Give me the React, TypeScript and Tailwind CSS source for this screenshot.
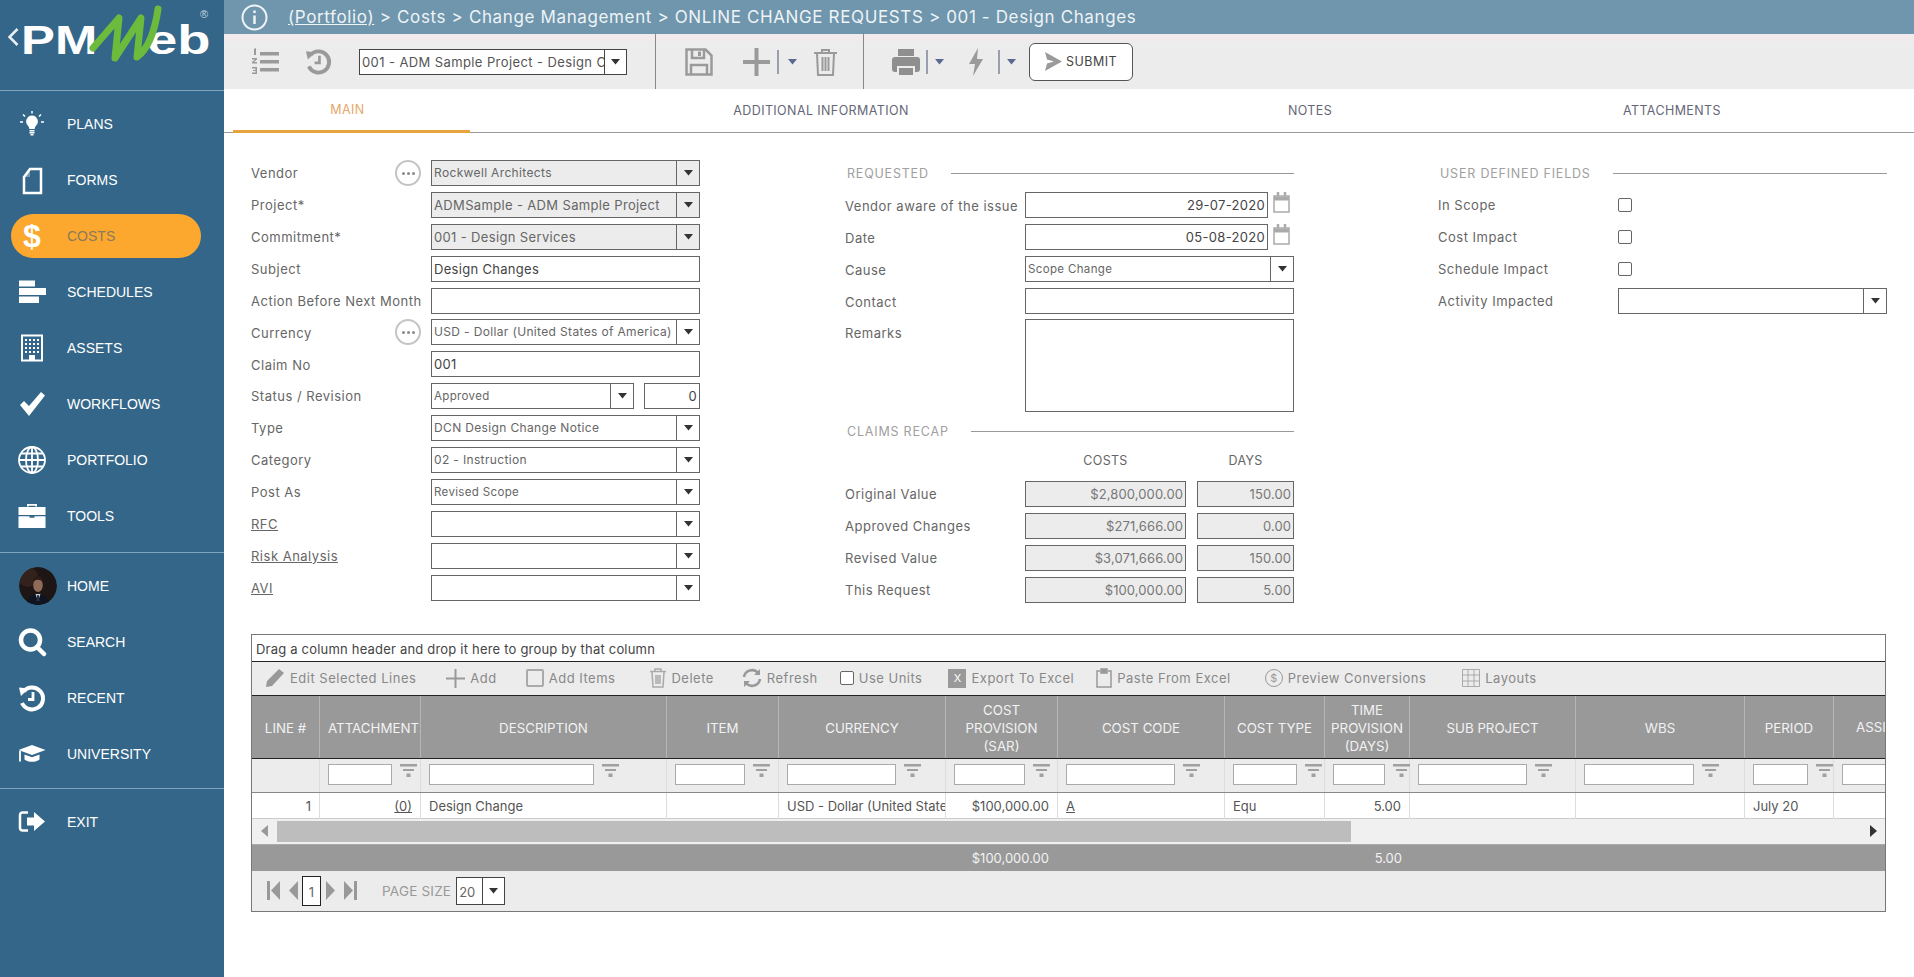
import React from 'react';

const LABEL = 'text-[13px] text-[#666] tracking-[0.5px] whitespace-nowrap';

const Caret = ({ color = '#333' }: { color?: string }) => (
  <svg width="9" height="6" viewBox="0 0 9 6"><path d="M0 0h9L4.500 5.500z" fill={color} /></svg>
);

// sidebar icons, all 30x30 and white
const Ico = ({ children }: { children: React.ReactNode }) => (
  <svg width="30" height="30" viewBox="0 0 30 30" fill="#fff">{children}</svg>
);

const PlansIcon = () => (
  <Ico>
    <path d="M15 6.500a6 6 0 0 1 4 10.300c-.9 1-1.200 2-1.300 3.200h-5.400c-.1-1.200-.4-2.200-1.300-3.200A6 6 0 0 1 15 6.500z" />
    <path d="M12.500 21h5v1.500h-5zM12.500 23h5v1.500h-5zM13.500 25h3v1.500h-3z" />
    <path d="M15 2v2.500M6 5.500l2 2M24 5.500l-2 2M3 13h3M24 13h3" stroke="#fff" strokeWidth="1.500" />
  </Ico>
);
const FormsIcon = () => (
  <Ico>
    <path d="M7 12l6-8h11v24H7z" fill="none" stroke="#fff" strokeWidth="2.500" />
    <path d="M13 4v8H7z" fill="#fff" opacity="0.35" />
  </Ico>
);
const SchedulesIcon = () => (
  <Ico>
    <path d="M2 3.500h16v6H2zM2 11h27v7H2zM2 19.500h20v6.500H2z" />
  </Ico>
);
const AssetsIcon = () => (
  <Ico>
    <path fillRule="evenodd" d="M4 1.500h22v27H4zM6 3.500v23h6V22h6v4.500h6v-23z" />
    <path d="M8 6h2v2H8zM12 6h2v2h-2zM16 6h2v2h-2zM20 6h2v2h-2zM8 10h2v2H8zM12 10h2v2h-2zM16 10h2v2h-2zM20 10h2v2h-2zM8 14h2v2H8zM12 14h2v2h-2zM16 14h2v2h-2zM20 14h2v2h-2zM8 18h2v2H8zM12 18h2v2h-2zM16 18h2v2h-2zM20 18h2v2h-2z" />
  </Ico>
);
const CheckIcon = () => (
  <Ico>
    <path d="M3 16l4-4 5 5L24 3l4 3.500L12 27z" />
  </Ico>
);
const GlobeIcon = () => (
  <svg width="30" height="30" viewBox="0 0 30 30" fill="none" stroke="#fff" strokeWidth="1.800">
    <circle cx="15" cy="15" r="13" />
    <ellipse cx="15" cy="15" rx="6" ry="13" />
    <path d="M15 2v26M2 15h26M4 8.500h22M4 21.500h22" />
  </svg>
);
const ToolsIcon = () => (
  <Ico>
    <path d="M10 5.500V3h10v2.500h-1.800V4.800h-6.400v.7z" />
    <path d="M1.500 6h27v8h-27zM1.500 15.200h11v1.500h5v-1.500h11V27h-27z" />
  </Ico>
);
const SearchIcon = () => (
  <svg width="30" height="30" viewBox="0 0 30 30" fill="none" stroke="#fff">
    <circle cx="13.500" cy="13" r="9.500" strokeWidth="4.500" />
    <path d="M20 20l7 7" strokeWidth="4.500" strokeLinecap="round" />
  </svg>
);
const RecentIcon = ({ color = '#fff' }: { color?: string }) => (
  <svg width="100%" height="100%" viewBox="0 0 30 30" fill="none" stroke={color}>
    <path d="M6.500 8.500A11 11 0 1 1 5 20" strokeWidth="4" />
    <path d="M2 4.500l9.500 1-7.500 7.500z" fill={color} stroke="none" />
    <path d="M16 9v7.500h-5" strokeWidth="2.800" />
  </svg>
);
const UniversityIcon = () => (
  <Ico>
    <path d="M1.500 11L15 6l13.500 5L15 16z" />
    <path d="M7.500 15.500L15 18.200l7.500-2.700v5c-2 1.500-4.500 2.300-7.500 2.300s-5.500-.8-7.500-2.300z" />
    <path d="M3 12v10.500" stroke="#fff" strokeWidth="1.800" />
  </Ico>
);
const ExitIcon = () => (
  <Ico>
    <path d="M11 5.500H5.500A2.500 2.500 0 0 0 3 8v13a2.500 2.500 0 0 0 2.500 2.500H11" fill="none" stroke="#fff" strokeWidth="2.500" />
    <path d="M10 10.500h7V5l11 9.500L17 24v-5.500h-7z" />
  </Ico>
);
const Avatar = () => (
  <svg width="38" height="38" viewBox="0 0 38 38" className="ml-[2px] rounded-full">
    <circle cx="19" cy="19" r="19" fill="#1e1614" />
    <circle cx="9" cy="10" r="10" fill="#33221c" />
    <path d="M7 38c1-8 5-10 12-11 7 1 11 3 12 11z" fill="#10141e" />
    <path d="M16.500 27l2.500 7 2.500-7z" fill="#c9ced6" />
    <path d="M18.200 28h1.600l.8 6h-3.200z" fill="#27304a" />
    <ellipse cx="19" cy="18" rx="4.800" ry="7" fill="#8f6a58" />
    <path d="M14 16c-.8-5 2.500-6.500 5-6.500s5.800 1.500 5 6.500c-1-2.500-2.500-3.300-5-3.300s-4 .8-5 3.300z" fill="#2a1c16" />
  </svg>
);

const NavItem = ({ icon, label, active }: { icon: React.ReactNode; label: string; active?: boolean }) => (
  <div className="h-[56px] px-[11px] flex items-center">
    <div className={`flex items-center w-[190px] h-[44px] pl-[6px] rounded-full ${active ? 'bg-[#fca82e]' : ''}`}>
      <div className="w-[50px] flex items-center shrink-0">{icon}</div>
      <span className={`font-['Liberation_Sans',sans-serif] text-[14px] ${active ? 'text-[#8b7a5c]' : 'text-white'}`}>{label}</span>
    </div>
  </div>
);

const Sidebar = () => (
  <aside className="w-[224px] shrink-0 bg-[#336688] min-h-[977px] flex flex-col">
    {/* logo */}
    <div className="relative h-[91px] border-b border-[#7fa3bb] shrink-0">
      <svg className="absolute left-[7px] top-[27px]" width="12" height="20" viewBox="0 0 12 20" fill="none" stroke="#e8eef2" strokeWidth="2.500">
        <path d="M10.500 2L2.500 10l8 8" />
      </svg>
      <span className="absolute left-[21px] top-[18px] origin-left scale-x-[1.27] font-['Liberation_Sans',sans-serif] font-bold text-[40px] leading-[44px] text-white">PM</span>
      <span className="absolute left-[147px] top-[18px] origin-left scale-x-[1.36] font-['Liberation_Sans',sans-serif] font-bold text-[40px] leading-[44px] text-white">eb</span>
      <svg className="absolute left-[88px] top-[5px]" width="76" height="60" viewBox="0 0 76 60" fill="none" stroke="#6cbb3c" strokeLinejoin="round" strokeLinecap="round">
        <path d="M5 43L31 13 27 53 53 13 49 52C60 44 67 25 70 4" strokeWidth="7" />
      </svg>
      <span className="absolute left-[200px] top-[6px] font-['Liberation_Sans',sans-serif] text-[11px] text-[#c5d6e0]">®</span>
    </div>
    <div className="pt-[5px] pb-[8px] border-b border-[#7fa3bb]">
      <NavItem icon={<PlansIcon />} label="PLANS" />
      <NavItem icon={<FormsIcon />} label="FORMS" />
      <NavItem icon={<span className="block w-[30px] text-center font-['Liberation_Sans',sans-serif] font-bold text-[32px] leading-[36px] text-white">$</span>} label="COSTS" active />
      <NavItem icon={<SchedulesIcon />} label="SCHEDULES" />
      <NavItem icon={<AssetsIcon />} label="ASSETS" />
      <NavItem icon={<CheckIcon />} label="WORKFLOWS" />
      <NavItem icon={<GlobeIcon />} label="PORTFOLIO" />
      <NavItem icon={<ToolsIcon />} label="TOOLS" />
    </div>
    <div className="pt-[5px] pb-[6px] border-b border-[#7fa3bb]">
      <NavItem icon={<Avatar />} label="HOME" />
      <NavItem icon={<SearchIcon />} label="SEARCH" />
      <NavItem icon={<div className="w-[30px] h-[30px]"><RecentIcon /></div>} label="RECENT" />
      <NavItem icon={<UniversityIcon />} label="UNIVERSITY" />
    </div>
    <div className="pt-[5px]">
      <NavItem icon={<ExitIcon />} label="EXIT" />
    </div>
  </aside>
);

const Toolbar = () => (
  <div className="h-[55px] flex items-center bg-[linear-gradient(#f1ebee_7px,#ececec_7px)]">
    <svg className="ml-[27px]" width="28" height="27" viewBox="0 0 28 27" fill="#9a9a9a">
      <path d="M9 4h19v3.500H9zM9 12h19v3.500H9zM9 20h19v3.500H9z" />
      <path d="M3 1l2-1v7H3zM1 10h5v1.500l-3 2.500h3v1.500H1v-1.500l3-2.500H1zM1 19h5v7H1v-1.500h3.500v-1.500H2v-1h2.500v-1.500H1z" />
    </svg>
    <div className="ml-[25px] w-[29px] h-[29px]"><RecentIcon color="#9a9a9a" /></div>
    <div className="ml-[26px] w-[268px] h-[26px] flex border border-[#444] bg-white">
      <span className="flex-1 overflow-hidden whitespace-nowrap pl-[2px] text-[13px] leading-[24px] tracking-[0.4px] text-[#555]">001 - ADM Sample Project - Design Changes</span>
      <span className="w-[22px] shrink-0 border-l border-[#444] flex items-center justify-center"><Caret /></span>
    </div>
    <div className="ml-[28px] w-px self-stretch bg-[#888]" />
    <svg className="ml-[29px]" width="28" height="28" viewBox="0 0 28 28" fill="none" stroke="#9a9a9a" strokeWidth="2.500">
      <path d="M1.500 1.500h19l6 6v19h-25z" />
      <path d="M7 2v8h12V2M6 26v-9h16v9" />
      <path d="M13 3.500h3v4.500h-3z" fill="#9a9a9a" stroke="none" />
    </svg>
    <svg className="ml-[30px]" width="27" height="28" viewBox="0 0 27 28" fill="#9a9a9a"><path d="M11.500 0h4v12H27v4H15.500v12h-4V16H0v-4h11.500z" /></svg>
    <div className="ml-[7px] w-[2px] h-[24px] bg-[#9a9fb0]" />
    <div className="ml-[9px]"><Caret color="#5a6a90" /></div>
    <svg className="ml-[16px]" width="25" height="28" viewBox="0 0 25 28" fill="none" stroke="#9a9a9a" strokeWidth="2">
      <path d="M1 5h23M9 5V2h7v3M4 5l1 22h15l1-22" />
      <path d="M9.500 9v14M12.500 9v14M15.500 9v14" />
    </svg>
    <div className="ml-[25px] w-px self-stretch bg-[#888]" />
    <svg className="ml-[28px]" width="28" height="26" viewBox="0 0 28 26" fill="#8f8f8f">
      <path d="M6 0h16v7H6z" />
      <path fillRule="evenodd" d="M3 8h22a3 3 0 0 1 3 3v9a3 3 0 0 1-3 3h-2v-6H5v6H3a3 3 0 0 1-3-3v-9a3 3 0 0 1 3-3z" />
      <path d="M7 19h14v7H7z" />
    </svg>
    <div className="ml-[6px] w-[2px] h-[24px] bg-[#9a9fb0]" />
    <div className="ml-[7px]"><Caret color="#5a6a90" /></div>
    <svg className="ml-[24px]" width="16" height="28" viewBox="0 0 16 28" fill="#9a9a9a"><path d="M10 0L1 16h6L5 28l10-17H9z" /></svg>
    <div className="ml-[14px] w-[2px] h-[24px] bg-[#9a9fb0]" />
    <div className="ml-[7px]"><Caret color="#5a6a90" /></div>
    <div className="ml-[13px] w-[104px] h-[38px] flex items-center justify-center gap-[4px] rounded-[6px] border border-[#555] bg-white">
      <svg width="17" height="19" viewBox="0 0 17 19" fill="#9a9a9a"><path d="M0 0l17 9.500L0 19l2-7.500 7-2-7-2z" /></svg>
      <span className="pt-[2px] text-[12.500px] tracking-[0.5px] text-[#444]">SUBMIT</span>
    </div>
  </div>
);

const Tabs = () => (
  <div className="h-[44px] pl-[9px] flex border-b border-[#999] text-[12.500px] tracking-[0.4px] text-[#667]">
    <div className="w-[237px] h-[44px] pr-[8px] pt-[1px] flex items-center justify-center border-b-[3px] border-[#e8a33d] text-[#e6a868]">MAIN</div>
    <div className="w-[702px] pt-[1px] flex items-center justify-center">ADDITIONAL INFORMATION</div>
    <div className="w-[276px] pt-[1px] flex items-center justify-center">NOTES</div>
    <div className="w-[448px] pt-[1px] flex items-center justify-center">ATTACHMENTS</div>
  </div>
);

const Select = ({ value = '', size = 'text-[12px]', gray, caretW = 'w-[23px]' }: { value?: string; size?: string; gray?: boolean; caretW?: string }) => (
  <div className={`flex-1 min-w-0 h-[26px] flex border border-[#666] ${gray ? 'bg-[#ececec]' : 'bg-white'}`}>
    <span className={`flex-1 min-w-0 overflow-hidden whitespace-nowrap pl-[2px] leading-[24px] tracking-[0.35px] text-[#666] ${size}`}>{value}</span>
    <span className={`${caretW} shrink-0 border-l border-[#666] flex items-center justify-center`}><Caret /></span>
  </div>
);

const Input = ({ value = '', right, color = 'text-[#444]' }: { value?: string; right?: boolean; color?: string }) => (
  <div className={`flex-1 min-w-0 h-[26px] border border-[#666] bg-white px-[2px] text-[13px] leading-[24px] tracking-[0.3px] whitespace-nowrap ${right ? 'text-right' : ''} ${color}`}>{value}</div>
);

const Dots = () => (
  <span className="w-[26px] h-[26px] mr-[10px] rounded-full border-2 border-[#c4c4c4] flex items-center justify-center gap-[2px]">
    <i className="w-[3px] h-[3px] rounded-full bg-[#8a8a8a]" />
    <i className="w-[3px] h-[3px] rounded-full bg-[#8a8a8a]" />
    <i className="w-[3px] h-[3px] rounded-full bg-[#8a8a8a]" />
  </span>
);

const Row = ({ label, dots, link, children }: { label: string; dots?: boolean; link?: boolean; children: React.ReactNode }) => (
  <div className="h-[26px] flex items-center">
    <span className={`w-[144px] shrink-0 pt-[2px] ${LABEL} ${link ? 'underline' : ''}`}>{label}</span>
    {dots ? <Dots /> : <span className="w-[36px] shrink-0" />}
    {children}
  </div>
);

const SectionTitle = ({ text, className = '' }: { text: string; className?: string }) => (
  <div className={`h-[26px] flex items-center gap-[22px] pl-[2px] ${className}`}>
    <span className="pt-[2px] text-[12.500px] tracking-[0.8px] text-[#a0a0a0] whitespace-nowrap">{text}</span>
    <div className="flex-1 h-px bg-[#999]" />
  </div>
);

const Calendar = () => (
  <svg className="ml-[5px] mr-[4px] shrink-0" width="17" height="21" viewBox="0 0 17 21" fill="none" stroke="#aaa" strokeWidth="1.500">
    <path d="M1 4h15v16H1z" />
    <path d="M1 6.500h15" strokeWidth="4" />
    <path d="M5 0v4M12 0v4" strokeWidth="2.500" />
  </svg>
);

const Row2 = ({ label, children }: { label: string; children: React.ReactNode }) => (
  <div className="flex items-start min-h-[26px]">
    <span className={`w-[180px] h-[26px] shrink-0 leading-[28px] ${LABEL}`}>{label}</span>
    {children}
  </div>
);

const Recap = ({ label, cost, days }: { label: string; cost: string; days: string }) => (
  <div className="h-[26px] flex items-center">
    <span className={`w-[180px] shrink-0 pt-[2px] ${LABEL}`}>{label}</span>
    <div className="w-[161px] h-[26px] border border-[#666] bg-[#ececec] px-[2px] text-right text-[13px] leading-[24px] tracking-[0.1px] text-[#777]">{cost}</div>
    <div className="ml-[11px] w-[97px] h-[26px] border border-[#666] bg-[#ececec] px-[2px] text-right text-[13px] leading-[24px] tracking-[0.1px] text-[#777]">{days}</div>
  </div>
);

const Form = () => (
  <div className="flex pl-[27px] pt-[27px]">
    <div className="w-[449px] shrink-0 flex flex-col gap-[5.900px]">
      <Row label="Vendor" dots><Select value="Rockwell Architects" size="text-[12px]" gray /></Row>
      <Row label="Project*"><Select value="ADMSample - ADM Sample Project" size="text-[13px]" gray /></Row>
      <Row label="Commitment*"><Select value="001 - Design Services" size="text-[13px]" gray /></Row>
      <Row label="Subject"><Input value="Design Changes" /></Row>
      <Row label="Action Before Next Month"><Input /></Row>
      <Row label="Currency" dots><Select value="USD - Dollar (United States of America)" size="text-[12px]" /></Row>
      <Row label="Claim No"><Input value="001" /></Row>
      <Row label="Status / Revision">
        <Select value="Approved" size="text-[11.500px]" />
        <div className="w-[56px] ml-[10px] shrink-0 flex"><Input value="0" right /></div>
      </Row>
      <Row label="Type"><Select value="DCN Design Change Notice" size="text-[12px]" /></Row>
      <Row label="Category"><Select value="02 - Instruction" size="text-[12px]" /></Row>
      <Row label="Post As"><Select value="Revised Scope" size="text-[11.500px]" /></Row>
      <Row label="RFC" link><Select /></Row>
      <Row label="Risk Analysis" link><Select /></Row>
      <Row label="AVI" link><Select /></Row>
    </div>

    <div className="w-[449px] ml-[145px] shrink-0 flex flex-col gap-[5.900px]">
      <SectionTitle text="REQUESTED" />
      <Row2 label="Vendor aware of the issue"><Input value="29-07-2020" right /><Calendar /></Row2>
      <Row2 label="Date"><Input value="05-08-2020" right /><Calendar /></Row2>
      <Row2 label="Cause"><Select value="Scope Change" size="text-[11.500px]" /></Row2>
      <Row2 label="Contact"><Input /></Row2>
      <Row2 label="Remarks"><div className="flex-1 h-[93px] border border-[#666] bg-white" /></Row2>
      <SectionTitle text="CLAIMS RECAP" />
      <div className="h-[20px] mt-[1px] mb-[4px] flex items-center text-[12.500px] tracking-[0.3px] text-[#666]">
        <span className="w-[180px]" />
        <span className="w-[161px] text-center">COSTS</span>
        <span className="ml-[11px] w-[97px] text-center">DAYS</span>
      </div>
      <Recap label="Original Value" cost="$2,800,000.00" days="150.00" />
      <Recap label="Approved Changes" cost="$271,666.00" days="0.00" />
      <Recap label="Revised Value" cost="$3,071,666.00" days="150.00" />
      <Recap label="This Request" cost="$100,000.00" days="5.00" />
    </div>

    <div className="w-[449px] ml-[144px] shrink-0 flex flex-col gap-[5.900px]">
      <SectionTitle text="USER DEFINED FIELDS" />
      {['In Scope', 'Cost Impact', 'Schedule Impact'].map((l) => (
        <div key={l} className="h-[26px] flex items-center">
          <span className={`w-[180px] shrink-0 pt-[2px] ${LABEL}`}>{l}</span>
          <span className="w-[14px] h-[14px] rounded-[2px] border border-[#666] bg-white" />
        </div>
      ))}
      <div className="h-[26px] flex items-center">
        <span className={`w-[180px] shrink-0 pt-[2px] ${LABEL}`}>Activity Impacted</span>
        <Select />
      </div>
    </div>
  </div>
);

const Funnel = () => (
  <svg className="shrink-0" width="17" height="13" viewBox="0 0 17 13" fill="#a0a0a0"><path d="M0 0h17v2.500H0zM3 5h11v2H3zM6.500 9.500h4V13h-4z" /></svg>
);

const COLS = 'grid grid-cols-[68px_101px_246px_112px_167px_112px_167px_100px_85px_166px_169px_89px_60px]';

const headers = ['LINE #', 'ATTACHMENTS', 'DESCRIPTION', 'ITEM', 'CURRENCY', 'COST PROVISION (SAR)', 'COST CODE', 'COST TYPE', 'TIME PROVISION (DAYS)', 'SUB PROJECT', 'WBS', 'PERIOD'];

const filters: (string | null)[] = [null, 'w-[64px]', 'w-[165px]', 'w-[70px]', 'w-[109px]', 'w-[71px]', 'w-[109px]', 'w-[64px]', 'w-[52px]', 'w-[109px]', 'w-[110px]', 'w-[55px]', 'w-[50px]'];

const Tool = ({ icon, label, className = '' }: { icon: React.ReactNode; label: string; className?: string }) => (
  <div className={`flex items-center gap-[5px] ${className}`}>
    {icon}
    <span className="text-[13px] tracking-[0.5px] text-[#888] whitespace-nowrap">{label}</span>
  </div>
);

const Cell = ({ children, className = '' }: { children?: React.ReactNode; className?: string }) => (
  <div className={`h-[26px] border-r border-[#ddd] px-[8px] overflow-hidden whitespace-nowrap text-[13px] leading-[26px] text-[#555] ${className}`}>{children}</div>
);

const GridTable = () => (
  <div className="mt-[31px] ml-[27px] w-[1635px] border border-[#777] bg-white overflow-hidden">
    <div className="h-[27px] px-[4px] pt-[1px] text-[13px] leading-[26px] tracking-[0.2px] text-[#444] border-b border-[#222]">Drag a column header and drop it here to group by that column</div>

    <div className="h-[34px] flex items-center bg-[#ececec] border-b border-[#222]">
      <Tool className="ml-[13px]" label="Edit Selected Lines" icon={
        <svg width="20" height="20" viewBox="0 0 20 20" fill="#999"><path d="M14 1l5 4L7 18l-6 1 1-6z" /></svg>
      } />
      <Tool className="ml-[30px]" label="Add" icon={
        <svg width="19" height="19" viewBox="0 0 19 19" fill="#999"><path d="M8.500 0h2v8.500H19v2h-8.500V19h-2v-8.500H0v-2h8.500z" /></svg>
      } />
      <Tool className="ml-[29px]" label="Add Items" icon={<span className="w-[18px] h-[18px] rounded-[2px] border-2 border-[#aaa]" />} />
      <Tool className="ml-[35px]" label="Delete" icon={
        <svg width="16" height="20" viewBox="0 0 16 20" fill="none" stroke="#aaa" strokeWidth="1.500">
          <path d="M0 3.500h16M5 3V1h6v2M2 4l1 15h10l1-15M6 7v9M8 7v9M10 7v9" />
        </svg>
      } />
      <Tool className="ml-[28px]" label="Refresh" icon={
        <svg width="20" height="20" viewBox="0 0 20 20" fill="none" stroke="#999" strokeWidth="2.500">
          <path d="M2 9a8 8 0 0 1 14-4M18 11a8 8 0 0 1-14 4" />
          <path d="M18 1v6h-6zM2 19v-6h6z" fill="#999" stroke="none" />
        </svg>
      } />
      <Tool className="ml-[22px]" label="Use Units" icon={<span className="w-[14px] h-[14px] rounded-[2px] border border-[#666] bg-white" />} />
      <Tool className="ml-[26px]" label="Export To Excel" icon={
        <span className="w-[18px] h-[19px] bg-[#999] text-white text-[11px] leading-[19px] text-center">X</span>
      } />
      <Tool className="ml-[22px]" label="Paste From Excel" icon={
        <svg width="16" height="20" viewBox="0 0 16 20" fill="none" stroke="#999" strokeWidth="1.500">
          <path d="M4 3H1v16h14V3h-3" />
          <path d="M5 1h6v4H5z" fill="#999" />
        </svg>
      } />
      <Tool className="ml-[34px]" label="Preview Conversions" icon={
        <span className="w-[18px] h-[18px] rounded-full border border-[#999] text-[#999] text-[11px] leading-[16px] text-center">$</span>
      } />
      <Tool className="ml-[36px]" label="Layouts" icon={
        <svg width="18" height="18" viewBox="0 0 18 18" fill="none" stroke="#aaa"><path d="M.5.500h17v17H.500zM.5 6h17M.5 12h17M6 .5v17M12 .5v17" /></svg>
      } />
    </div>

    <div className={`${COLS} h-[63px] bg-[#999] border-b border-[#222]`}>
      {headers.map((h) => (
        <div key={h} className={`border-r border-[#b5b5b5] pt-[3px] flex items-center text-center text-[13.300px] leading-[18px] text-[#f2f2f2] overflow-hidden whitespace-pre-line ${h === 'ATTACHMENTS' ? 'justify-start pl-[8px]' : 'justify-center px-[2px]'}`}>
          {h === 'COST PROVISION (SAR)' ? 'COST\nPROVISION\n(SAR)' : h === 'TIME PROVISION (DAYS)' ? 'TIME\nPROVISION\n(DAYS)' : h}
        </div>
      ))}
      <div className="pl-[22px] pt-[3px] flex items-center text-[13.300px] text-[#f2f2f2]">ASSI</div>
    </div>

    <div className={`${COLS} h-[34px] bg-[#ececec] border-b border-[#888]`}>
      {filters.map((w, i) => (
        <div key={i} className="border-r border-[#ddd] pl-[8px] pt-[5px] flex gap-[8px]">
          {w && <div className={`${w} h-[21px] shrink-0 border border-[#aaa] bg-white`} />}
          {w && i < 12 && <Funnel />}
        </div>
      ))}
    </div>

    <div className={`${COLS} h-[26px] border-b border-[#ccc]`}>
      <Cell className="text-right">1</Cell>
      <Cell className="text-right underline">(0)</Cell>
      <Cell>Design Change</Cell>
      <Cell />
      <Cell>USD - Dollar (United States</Cell>
      <Cell className="text-right">$100,000.00</Cell>
      <Cell className="underline">A</Cell>
      <Cell>Equ</Cell>
      <Cell className="text-right">5.00</Cell>
      <Cell />
      <Cell />
      <Cell>July 20</Cell>
      <Cell className="border-r-0" />
    </div>

    <div className="h-[26px] flex items-center bg-[#f0f0f0] border-b border-[#aaa]">
      <svg className="ml-[9px]" width="7" height="12" viewBox="0 0 7 12" fill="#999"><path d="M7 0v12L0 6z" /></svg>
      <div className="ml-[9px] w-[1074px] h-[21px] bg-[#bdbdbd]" />
      <svg className="ml-auto mr-[8px]" width="7" height="12" viewBox="0 0 7 12" fill="#333"><path d="M0 0v12l7-6z" /></svg>
    </div>

    <div className={`${COLS} h-[26px] bg-[#999] text-[13px] leading-[26px] text-[#f2f2f2]`}>
      <span className="col-start-6 text-right pr-[9px]">$100,000.00</span>
      <span className="col-start-9 text-right pr-[8px]">5.00</span>
    </div>

    <div className="h-[40px] bg-[#ececec] flex items-center pl-[15px]">
      <svg width="13" height="19" viewBox="0 0 13 19" fill="#999"><path d="M0 0h3v19H0zM13 0v19L4 9.500z" /></svg>
      <svg className="ml-[9px]" width="9" height="19" viewBox="0 0 9 19" fill="#999"><path d="M9 0v19L0 9.500z" /></svg>
      <span className="ml-[4px] w-[19px] h-[30px] border border-[#222] bg-white text-center text-[13px] leading-[30px] text-[#666]">1</span>
      <svg className="ml-[5px]" width="9" height="19" viewBox="0 0 9 19" fill="#999"><path d="M0 0v19l9-9.500z" /></svg>
      <svg className="ml-[9px]" width="13" height="19" viewBox="0 0 13 19" fill="#999"><path d="M13 0h-3v19h3zM0 0v19l9-9.500z" /></svg>
      <span className="ml-[25px] text-[13.500px] tracking-[0.2px] text-[#999]">PAGE SIZE</span>
      <div className="ml-[5px] w-[49px] h-[28px] flex border border-[#444] bg-white">
        <span className="flex-1 pl-[2px] text-[13px] leading-[28px] text-[#666]">20</span>
        <span className="w-[22px] border-l border-[#444] flex items-center justify-center"><Caret /></span>
      </div>
    </div>
  </div>
);

export default function App() {
  return (
    <div className="flex w-[1914px] h-[977px] overflow-hidden bg-white font-['Inter','Liberation_Sans',sans-serif]">
      <Sidebar />
      <main className="flex-1 min-w-0 flex flex-col">
        <header className="h-[34px] shrink-0 bg-[#6f96ad] flex items-center pl-[17px]">
          <svg width="27" height="27" viewBox="0 0 27 27" fill="none" stroke="#f0f4f6" strokeWidth="2">
            <circle cx="13.500" cy="13.500" r="12" />
            <path d="M13.500 11.500v8.500M13.500 6.500v2.500" strokeWidth="2.500" />
          </svg>
          <p className="ml-[20px] pt-[2px] text-[17px] tracking-[0.63px] text-[#eef3f6] whitespace-nowrap">
            <span className="underline">(Portfolio)</span> {'>'} Costs {'>'} Change Management {'>'} ONLINE CHANGE REQUESTS {'>'} 001 - Design Changes
          </p>
        </header>
        <Toolbar />
        <Tabs />
        <Form />
        <GridTable />
      </main>
    </div>
  );
}
